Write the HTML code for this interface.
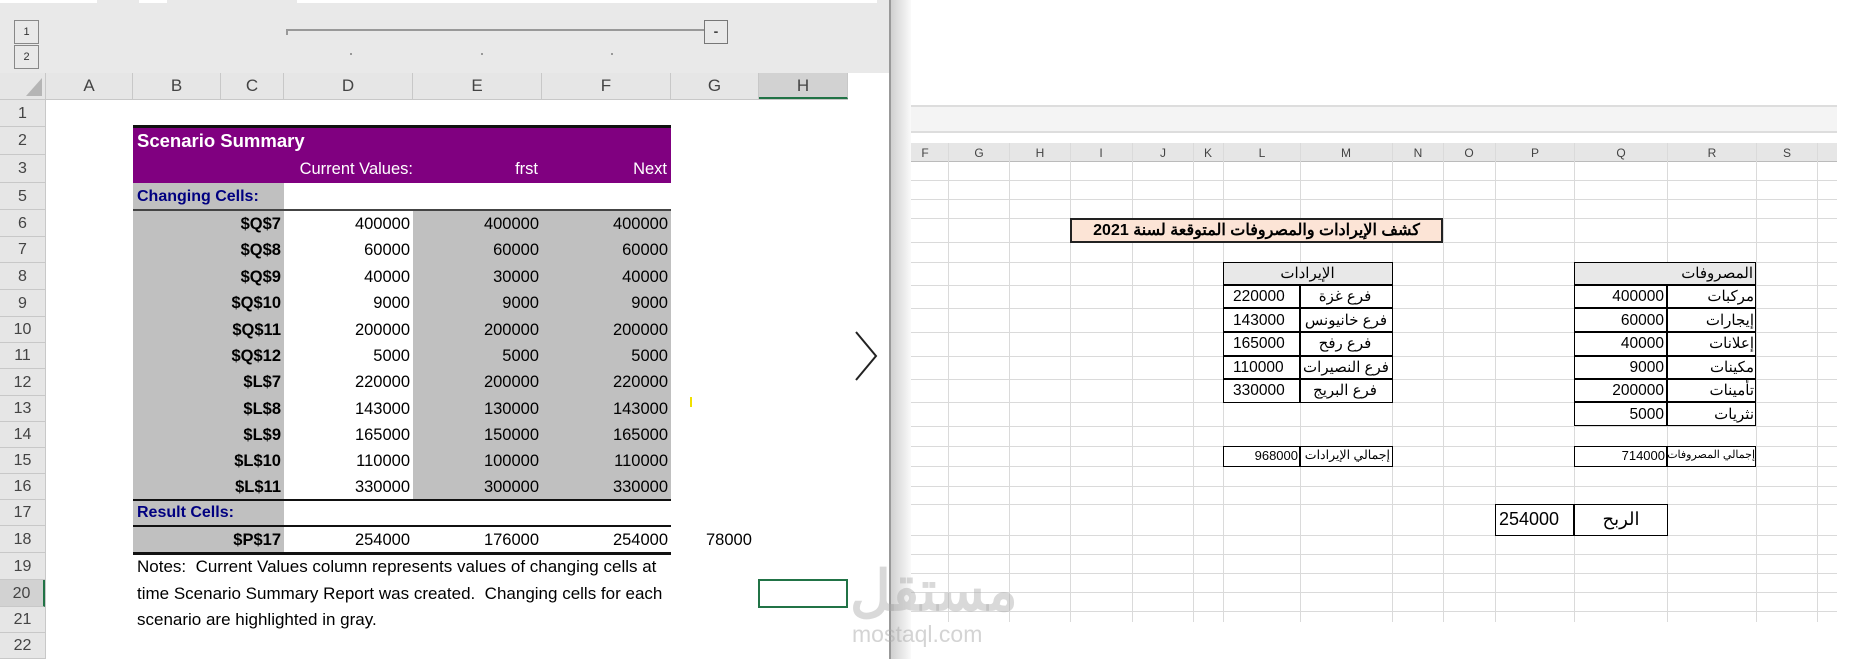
<!DOCTYPE html>
<html><head><meta charset="utf-8"><style>
*{margin:0;padding:0;box-sizing:border-box}
body{width:1858px;height:659px;position:relative;overflow:hidden;background:#fff;font-family:"Liberation Sans","Noto Sans CJK SC",sans-serif}
.a{position:absolute}
.t{position:absolute;white-space:nowrap;font-size:16.5px;color:#000;line-height:26px}
.r{text-align:right}
.hd{position:absolute;top:73px;height:26px;background:#e6e6e6;border-right:1px solid #c8c8c8;color:#444;font-size:17px;text-align:center;line-height:26px}
.rh{position:absolute;left:0;width:45px;background:#e6e6e6;border-bottom:1px solid #c8c8c8;color:#444;font-size:16px;text-align:center}
.g{background:#c0c0c0}
.rt{position:absolute;font-size:15px;line-height:23px;white-space:nowrap;direction:rtl;font-family:"Liberation Sans","Noto Sans CJK SC",sans-serif}
.n{position:absolute;font-size:15.5px;line-height:23px;white-space:nowrap}
.bx{position:absolute;border:1.5px solid #000}
</style></head><body>
<div class="a" style="left:0;top:0;width:890px;height:73px;background:#e9e9e9"></div>
<div class="a" style="left:0;top:0;width:97px;height:3px;background:#fff"></div>
<div class="a" style="left:139px;top:0;width:28px;height:3px;background:#fff"></div>
<div class="a" style="left:297px;top:0;width:580px;height:3px;background:#fff"></div>
<div class="a" style="left:14px;top:20px;width:25px;height:24px;border:1px solid #888;font-size:11px;text-align:center;line-height:22px;color:#333">1</div>
<div class="a" style="left:14px;top:45px;width:25px;height:24px;border:1px solid #888;font-size:11px;text-align:center;line-height:22px;color:#333">2</div>
<div class="a" style="left:286px;top:29px;width:418px;height:2px;background:#999"></div>
<div class="a" style="left:286px;top:29px;width:2px;height:6px;background:#999"></div>
<div class="a" style="left:704px;top:20px;width:24px;height:24px;border:1px solid #777;text-align:center;line-height:20px;font-size:14px;font-weight:bold;color:#444">-</div>
<div class="a" style="left:350px;top:53px;width:2px;height:2px;background:#999"></div>
<div class="a" style="left:481px;top:53px;width:2px;height:2px;background:#999"></div>
<div class="a" style="left:611px;top:53px;width:2px;height:2px;background:#999"></div>
<div class="a" style="left:0;top:73px;width:46px;height:26px;background:#e6e6e6;border-right:1px solid #c8c8c8"></div>
<svg class="a" style="left:26px;top:78px" width="16" height="18"><polygon points="16,0 16,18 0,18" fill="#b5b5b5"/></svg>
<div class="hd" style="left:46px;width:87px">A</div>
<div class="hd" style="left:133px;width:88px">B</div>
<div class="hd" style="left:221px;width:63px">C</div>
<div class="hd" style="left:284px;width:129px">D</div>
<div class="hd" style="left:413px;width:129px">E</div>
<div class="hd" style="left:542px;width:129px">F</div>
<div class="hd" style="left:671px;width:88px">G</div>
<div class="hd" style="left:759px;width:89px;background:#d2d2d2;border-bottom:2px solid #217346">H</div>
<div class="a" style="left:0;top:99px;width:848px;height:1px;background:#c8c8c8"></div>
<div class="rh" style="top:100px;height:27px;line-height:27px">1</div>
<div class="rh" style="top:127px;height:28px;line-height:28px">2</div>
<div class="rh" style="top:155px;height:28px;line-height:28px">3</div>
<div class="rh" style="top:183px;height:27px;line-height:27px">5</div>
<div class="rh" style="top:210px;height:27px;line-height:27px">6</div>
<div class="rh" style="top:237px;height:26px;line-height:26px">7</div>
<div class="rh" style="top:263px;height:27px;line-height:27px">8</div>
<div class="rh" style="top:290px;height:27px;line-height:27px">9</div>
<div class="rh" style="top:317px;height:26px;line-height:26px">10</div>
<div class="rh" style="top:343px;height:26px;line-height:26px">11</div>
<div class="rh" style="top:369px;height:27px;line-height:27px">12</div>
<div class="rh" style="top:396px;height:26px;line-height:26px">13</div>
<div class="rh" style="top:422px;height:26px;line-height:26px">14</div>
<div class="rh" style="top:448px;height:26px;line-height:26px">15</div>
<div class="rh" style="top:474px;height:26px;line-height:26px">16</div>
<div class="rh" style="top:500px;height:26px;line-height:26px">17</div>
<div class="rh" style="top:526px;height:27px;line-height:27px">18</div>
<div class="rh" style="top:553px;height:27px;line-height:27px">19</div>
<div class="rh" style="top:580px;height:27px;line-height:27px;background:#d2d2d2;border-right:2px solid #217346">20</div>
<div class="rh" style="top:607px;height:26px;line-height:26px">21</div>
<div class="rh" style="top:633px;height:26px;line-height:26px">22</div>
<div class="a" style="left:45px;top:100px;width:1px;height:559px;background:#c8c8c8"></div>
<div class="a" style="left:133px;top:125px;width:538px;height:58px;background:#800080;border-top:3px solid #111"></div>
<div class="t" style="left:137px;top:128px;color:#fff;font-weight:bold;font-size:18.5px">Scenario Summary</div>
<div class="t r" style="left:284px;width:129px;top:156px;color:#fff">Current Values:</div>
<div class="t r" style="left:413px;width:129px;top:156px;color:#fff;padding-right:4px">frst</div>
<div class="t r" style="left:542px;width:129px;top:156px;color:#fff;padding-right:4px">Next</div>
<div class="a g" style="left:133px;top:183px;width:151px;height:370px"></div>
<div class="a g" style="left:413px;top:210px;width:258px;height:290px"></div>
<div class="t" style="left:137px;top:184px;color:#000080;font-weight:bold;font-size:16px">Changing Cells:</div>
<div class="t" style="left:137px;top:500px;color:#000080;font-weight:bold;font-size:16px">Result Cells:</div>
<div class="a" style="left:133px;top:209px;width:538px;height:2px;background:#444"></div>
<div class="a" style="left:133px;top:499px;width:538px;height:2px;background:#111"></div>
<div class="a" style="left:133px;top:525px;width:538px;height:2px;background:#111"></div>
<div class="a" style="left:133px;top:552px;width:538px;height:3px;background:#111"></div>
<div class="t r" style="left:133px;width:148px;top:211px;font-weight:bold">$Q$7</div><div class="t r" style="left:284px;width:126px;top:211px">400000</div><div class="t r" style="left:413px;width:126px;top:211px">400000</div><div class="t r" style="left:542px;width:126px;top:211px">400000</div>
<div class="t r" style="left:133px;width:148px;top:237px;font-weight:bold">$Q$8</div><div class="t r" style="left:284px;width:126px;top:237px">60000</div><div class="t r" style="left:413px;width:126px;top:237px">60000</div><div class="t r" style="left:542px;width:126px;top:237px">60000</div>
<div class="t r" style="left:133px;width:148px;top:264px;font-weight:bold">$Q$9</div><div class="t r" style="left:284px;width:126px;top:264px">40000</div><div class="t r" style="left:413px;width:126px;top:264px">30000</div><div class="t r" style="left:542px;width:126px;top:264px">40000</div>
<div class="t r" style="left:133px;width:148px;top:290px;font-weight:bold">$Q$10</div><div class="t r" style="left:284px;width:126px;top:290px">9000</div><div class="t r" style="left:413px;width:126px;top:290px">9000</div><div class="t r" style="left:542px;width:126px;top:290px">9000</div>
<div class="t r" style="left:133px;width:148px;top:317px;font-weight:bold">$Q$11</div><div class="t r" style="left:284px;width:126px;top:317px">200000</div><div class="t r" style="left:413px;width:126px;top:317px">200000</div><div class="t r" style="left:542px;width:126px;top:317px">200000</div>
<div class="t r" style="left:133px;width:148px;top:343px;font-weight:bold">$Q$12</div><div class="t r" style="left:284px;width:126px;top:343px">5000</div><div class="t r" style="left:413px;width:126px;top:343px">5000</div><div class="t r" style="left:542px;width:126px;top:343px">5000</div>
<div class="t r" style="left:133px;width:148px;top:369px;font-weight:bold">$L$7</div><div class="t r" style="left:284px;width:126px;top:369px">220000</div><div class="t r" style="left:413px;width:126px;top:369px">200000</div><div class="t r" style="left:542px;width:126px;top:369px">220000</div>
<div class="t r" style="left:133px;width:148px;top:396px;font-weight:bold">$L$8</div><div class="t r" style="left:284px;width:126px;top:396px">143000</div><div class="t r" style="left:413px;width:126px;top:396px">130000</div><div class="t r" style="left:542px;width:126px;top:396px">143000</div>
<div class="t r" style="left:133px;width:148px;top:422px;font-weight:bold">$L$9</div><div class="t r" style="left:284px;width:126px;top:422px">165000</div><div class="t r" style="left:413px;width:126px;top:422px">150000</div><div class="t r" style="left:542px;width:126px;top:422px">165000</div>
<div class="t r" style="left:133px;width:148px;top:448px;font-weight:bold">$L$10</div><div class="t r" style="left:284px;width:126px;top:448px">110000</div><div class="t r" style="left:413px;width:126px;top:448px">100000</div><div class="t r" style="left:542px;width:126px;top:448px">110000</div>
<div class="t r" style="left:133px;width:148px;top:474px;font-weight:bold">$L$11</div><div class="t r" style="left:284px;width:126px;top:474px">330000</div><div class="t r" style="left:413px;width:126px;top:474px">300000</div><div class="t r" style="left:542px;width:126px;top:474px">330000</div>
<div class="t r" style="left:133px;width:148px;top:527px;font-weight:bold">$P$17</div><div class="t r" style="left:284px;width:126px;top:527px">254000</div><div class="t r" style="left:413px;width:126px;top:527px">176000</div><div class="t r" style="left:542px;width:126px;top:527px">254000</div>
<div class="t" style="left:706px;top:527px">78000</div>
<div class="t" style="left:137px;top:554px;font-size:17px">Notes:&nbsp; Current Values column represents values of changing cells at</div>
<div class="t" style="left:137px;top:581px;font-size:17px">time Scenario Summary Report was created.&nbsp; Changing cells for each</div>
<div class="t" style="left:137px;top:607px;font-size:17px">scenario are highlighted in gray.</div>
<div class="a" style="left:690px;top:397px;width:2px;height:10px;background:#f0e000"></div>
<div class="a" style="left:758px;top:579px;width:90px;height:29px;border:2px solid #217346"></div>
<svg class="a" style="left:850px;top:330px" width="32" height="52"><path d="M6 2 L26 26 L6 50" fill="none" stroke="#222" stroke-width="2"/></svg>
<div class="a" style="left:889px;top:0;width:2px;height:659px;background:#999"></div>
<div class="a" style="left:891px;top:0;width:20px;height:659px;background:linear-gradient(90deg,#d0d0d0,#fafafa)"></div>
<div class="a" style="left:911px;top:105px;width:926px;height:28px;background:#f4f4f4;border-top:2px solid #ddd;border-bottom:2px solid #ddd"></div>
<div class="a" style="left:911px;top:143px;width:926px;height:19px;background:#e6e6e6;border-bottom:1px solid #bbb"></div>
<svg class="a" style="left:0;top:0" width="1858" height="659">
<g stroke="#dadada" stroke-width="1">
<line x1="911" y1="180.5" x2="1837" y2="180.5"/><line x1="911" y1="199.5" x2="1837" y2="199.5"/><line x1="911" y1="218.5" x2="1837" y2="218.5"/><line x1="911" y1="242.5" x2="1837" y2="242.5"/><line x1="911" y1="262.5" x2="1837" y2="262.5"/><line x1="911" y1="285.5" x2="1837" y2="285.5"/><line x1="911" y1="308.5" x2="1837" y2="308.5"/><line x1="911" y1="332.5" x2="1837" y2="332.5"/><line x1="911" y1="356.5" x2="1837" y2="356.5"/><line x1="911" y1="379.5" x2="1837" y2="379.5"/><line x1="911" y1="402.5" x2="1837" y2="402.5"/><line x1="911" y1="426.5" x2="1837" y2="426.5"/><line x1="911" y1="446.5" x2="1837" y2="446.5"/><line x1="911" y1="466.5" x2="1837" y2="466.5"/><line x1="911" y1="486.5" x2="1837" y2="486.5"/><line x1="911" y1="504.5" x2="1837" y2="504.5"/><line x1="911" y1="535.5" x2="1837" y2="535.5"/><line x1="911" y1="554.5" x2="1837" y2="554.5"/><line x1="911" y1="573.5" x2="1837" y2="573.5"/><line x1="911" y1="592.5" x2="1837" y2="592.5"/><line x1="911" y1="611.5" x2="1837" y2="611.5"/>
<line x1="948.5" y1="143" x2="948.5" y2="622"/><line x1="1009.5" y1="143" x2="1009.5" y2="622"/><line x1="1070.5" y1="143" x2="1070.5" y2="622"/><line x1="1132.5" y1="143" x2="1132.5" y2="622"/><line x1="1193.5" y1="143" x2="1193.5" y2="622"/><line x1="1223.5" y1="143" x2="1223.5" y2="622"/><line x1="1300.5" y1="143" x2="1300.5" y2="622"/><line x1="1392.5" y1="143" x2="1392.5" y2="622"/><line x1="1443.5" y1="143" x2="1443.5" y2="622"/><line x1="1495.5" y1="143" x2="1495.5" y2="622"/><line x1="1574.5" y1="143" x2="1574.5" y2="622"/><line x1="1667.5" y1="143" x2="1667.5" y2="622"/><line x1="1756.5" y1="143" x2="1756.5" y2="622"/><line x1="1817.5" y1="143" x2="1817.5" y2="622"/>
</g>
<g fill="#444" font-family="Liberation Sans" font-size="12" text-anchor="middle">
<text x="925" y="157">F</text><text x="979" y="157">G</text><text x="1040" y="157">H</text><text x="1101" y="157">I</text><text x="1163" y="157">J</text><text x="1208" y="157">K</text><text x="1262" y="157">L</text><text x="1346" y="157">M</text><text x="1418" y="157">N</text><text x="1469" y="157">O</text><text x="1535" y="157">P</text><text x="1621" y="157">Q</text><text x="1712" y="157">R</text><text x="1787" y="157">S</text>
</g>
</svg>
<div class="a" style="left:1070px;top:218px;width:373px;height:25px;background:#fce4d6;border:2px solid #222;text-align:center;font-weight:bold;font-size:16px;line-height:21px;direction:rtl">كشف الإيرادات والمصروفات المتوقعة لسنة 2021</div>
<div class="a" style="left:1223px;top:262px;width:169px;height:23px;background:#e8e8e8"></div>
<div class="rt" style="left:1223px;top:262px;width:169px;text-align:center">الإيرادات</div>
<div class="bx" style="left:1223px;top:262px;width:170px;height:141px"></div>
<div class="a" style="left:1223px;top:284px;width:169px;height:2px;background:#000"></div>
<div class="a" style="left:1223px;top:307px;width:169px;height:2px;background:#000"></div>
<div class="a" style="left:1223px;top:331px;width:169px;height:2px;background:#000"></div>
<div class="a" style="left:1223px;top:355px;width:169px;height:2px;background:#000"></div>
<div class="a" style="left:1223px;top:378px;width:169px;height:2px;background:#000"></div>
<div class="a" style="left:1299px;top:285px;width:2px;height:117px;background:#000"></div>
<div class="rt" style="left:1301px;top:285px;width:88px;text-align:center">فرع غزة</div><div class="n" style="left:1233px;top:285px">220000</div>
<div class="rt" style="left:1301px;top:309px;width:90px;text-align:center">فرع خانيونس</div><div class="n" style="left:1233px;top:309px">143000</div>
<div class="rt" style="left:1301px;top:332px;width:88px;text-align:center">فرع رفح</div><div class="n" style="left:1233px;top:332px">165000</div>
<div class="rt" style="left:1301px;top:356px;width:90px;text-align:center">فرع النصيرات</div><div class="n" style="left:1233px;top:356px">110000</div>
<div class="rt" style="left:1301px;top:379px;width:88px;text-align:center">فرع البريج</div><div class="n" style="left:1233px;top:379px">330000</div>
<div class="bx" style="left:1223px;top:446px;width:170px;height:21px"></div>
<div class="a" style="left:1299px;top:446px;width:2px;height:21px;background:#000"></div>
<div class="rt" style="left:1301px;top:445px;width:89px;font-size:12.5px;line-height:21px">إجمالي الإيرادات</div><div class="n r" style="left:1223px;width:75px;top:445px;font-size:13px;line-height:21px">968000</div>
<div class="a" style="left:1574px;top:262px;width:181px;height:23px;background:#e8e8e8"></div>
<div class="rt" style="left:1574px;top:262px;width:179px">المصروفات</div>
<div class="bx" style="left:1574px;top:262px;width:182px;height:164px"></div>
<div class="a" style="left:1574px;top:284px;width:181px;height:2px;background:#000"></div>
<div class="a" style="left:1574px;top:307px;width:181px;height:2px;background:#000"></div>
<div class="a" style="left:1574px;top:331px;width:181px;height:2px;background:#000"></div>
<div class="a" style="left:1574px;top:355px;width:181px;height:2px;background:#000"></div>
<div class="a" style="left:1574px;top:378px;width:181px;height:2px;background:#000"></div>
<div class="a" style="left:1574px;top:401px;width:181px;height:2px;background:#000"></div>
<div class="a" style="left:1666px;top:285px;width:2px;height:140px;background:#000"></div>
<div class="rt" style="left:1668px;top:285px;width:86px">مركبات</div><div class="n r" style="left:1574px;width:90px;top:285px">400000</div>
<div class="rt" style="left:1668px;top:309px;width:86px">إيجارات</div><div class="n r" style="left:1574px;width:90px;top:309px">60000</div>
<div class="rt" style="left:1668px;top:332px;width:86px">إعلانات</div><div class="n r" style="left:1574px;width:90px;top:332px">40000</div>
<div class="rt" style="left:1668px;top:356px;width:86px">مكينات</div><div class="n r" style="left:1574px;width:90px;top:356px">9000</div>
<div class="rt" style="left:1668px;top:379px;width:86px">تأمينات</div><div class="n r" style="left:1574px;width:90px;top:379px">200000</div>
<div class="rt" style="left:1668px;top:403px;width:86px">نثريات</div><div class="n r" style="left:1574px;width:90px;top:403px">5000</div>
<div class="bx" style="left:1574px;top:446px;width:182px;height:21px"></div>
<div class="a" style="left:1666px;top:446px;width:2px;height:21px;background:#000"></div>
<div class="rt" style="left:1667px;top:445px;width:88px;font-size:11px;line-height:21px">إجمالي المصروفات</div><div class="n r" style="left:1574px;width:91px;top:445px;font-size:13px;line-height:21px">714000</div>
<div class="bx" style="left:1495px;top:504px;width:173px;height:32px"></div>
<div class="a" style="left:1573px;top:504px;width:2px;height:32px;background:#000"></div>
<div class="n" style="left:1499px;top:508px;font-size:18px">254000</div>
<div class="rt" style="left:1575px;top:508px;width:92px;text-align:center;font-size:18px">الربح</div>
<div class="a" style="left:850px;top:562px;font-size:56px;font-weight:bold;color:rgba(170,170,170,0.45);line-height:58px;direction:rtl;font-family:'Liberation Sans','Noto Sans CJK SC',sans-serif">مستقل</div>
<div class="a" style="left:852px;top:622px;font-size:23px;color:rgba(170,170,170,0.5);line-height:24px">mostaql.com</div>
</body></html>
